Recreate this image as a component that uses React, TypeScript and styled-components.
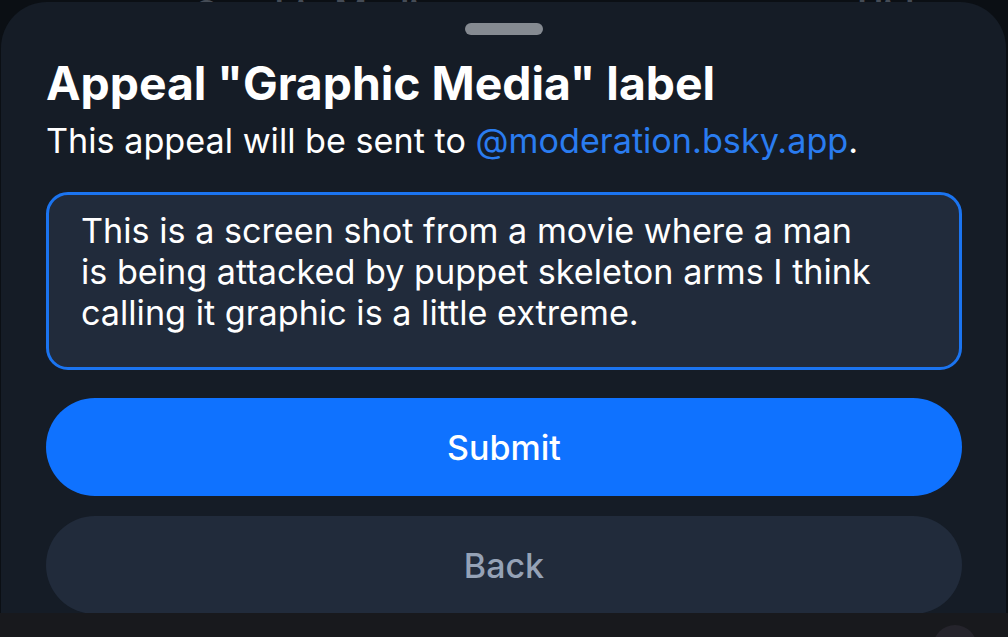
import React from "react";
import styled, { createGlobalStyle } from "styled-components";

const GlobalStyle = createGlobalStyle`
  html, body {
    margin: 0;
    padding: 0;
    background: #0b0f14;
    width: 1008px;
    height: 637px;
    overflow: hidden;
    font-family: Inter, "Noto Sans", "Liberation Sans", sans-serif;
    -webkit-font-smoothing: antialiased;
  }
  * { box-sizing: border-box; }
`;

const Page = styled.div`
  width: 1008px;
  height: 637px;
  display: flex;
  flex-direction: column;
`;

const BehindStrip = styled.div`
  height: 2px;
  overflow: hidden;
  display: flex;
  align-items: flex-end;
  justify-content: space-between;
  padding: 0 73px 0 193px;
`;

const BehindText = styled.span`
  font-size: 35px;
  line-height: 35px;
  font-weight: 600;
  color: #454c56;
  transform: translateY(29px);
  white-space: nowrap;
`;

const Sheet = styled.div`
  flex: 0 0 611px;
  margin: 0 2px 0 1px;
  background: #151c26;
  border-radius: 46px 46px 0 0;
  padding: 21px 44px 0 45px;
  display: flex;
  flex-direction: column;
  overflow: hidden;
`;

const Handle = styled.div`
  width: 78px;
  height: 12px;
  border-radius: 6px;
  background: #858a91;
  align-self: center;
  flex: none;
`;

const Title = styled.h1`
  margin: 22px 0 0 0;
  font-size: 46.3px;
  line-height: 52px;
  font-weight: 700;
  color: #ffffff;
  letter-spacing: 0;
  white-space: nowrap;
`;

const Subtitle = styled.p`
  margin: 11px 0 0 0;
  font-size: 34.2px;
  line-height: 42px;
  font-weight: 400;
  color: #ffffff;
  white-space: nowrap;
`;

const Link = styled.span`
  color: #2a7cf0;
`;

const TextBox = styled.div`
  margin-top: 30px;
  height: 178px;
  border: 3px solid #1b74f0;
  border-radius: 22px;
  background: #212b3b;
  padding: 15px 30px 0 32px;
  color: #ffffff;
  font-size: 34.2px;
  line-height: 41px;
  font-weight: 400;
  flex: none;
`;

const Line = styled.div`
  white-space: nowrap;
`;

const Button = styled.div<{ $primary?: boolean }>`
  height: 98px;
  border-radius: 49px;
  display: flex;
  align-items: center;
  justify-content: center;
  background: ${(p) => (p.$primary ? "#0f72ff" : "#212b3b")};
  color: ${(p) => (p.$primary ? "#ffffff" : "#95a2b6")};
  font-size: 34px;
  font-weight: 500;
  flex: none;
`;

const SubmitButton = styled(Button)`
  margin-top: 28px;
`;

const BackButton = styled(Button)`
  margin-top: 20px;
`;

const BottomBar = styled.div`
  flex: 1;
  background: #18191d;
  position: relative;
  overflow: hidden;
`;

const Dot = styled.div`
  position: absolute;
  left: 933px;
  top: 12px;
  width: 44px;
  height: 44px;
  border-radius: 50%;
  background: #25242c;
`;

export default function App() {
  return (
    <>
      <GlobalStyle />
      <Page>
        <BehindStrip>
          <BehindText>Graphic Media</BehindText>
          <BehindText>Hide</BehindText>
        </BehindStrip>
        <Sheet>
          <Handle />
          <Title>Appeal "Graphic Media" label</Title>
          <Subtitle>
            This appeal will be sent to <Link>@moderation.bsky.app</Link>.
          </Subtitle>
          <TextBox>
            <Line>This is a screen shot from a movie where a man</Line>
            <Line>is being attacked by puppet skeleton arms I think</Line>
            <Line>calling it graphic is a little extreme.</Line>
          </TextBox>
          <SubmitButton $primary>Submit</SubmitButton>
          <BackButton>Back</BackButton>
        </Sheet>
        <BottomBar>
          <Dot />
        </BottomBar>
      </Page>
    </>
  );
}
